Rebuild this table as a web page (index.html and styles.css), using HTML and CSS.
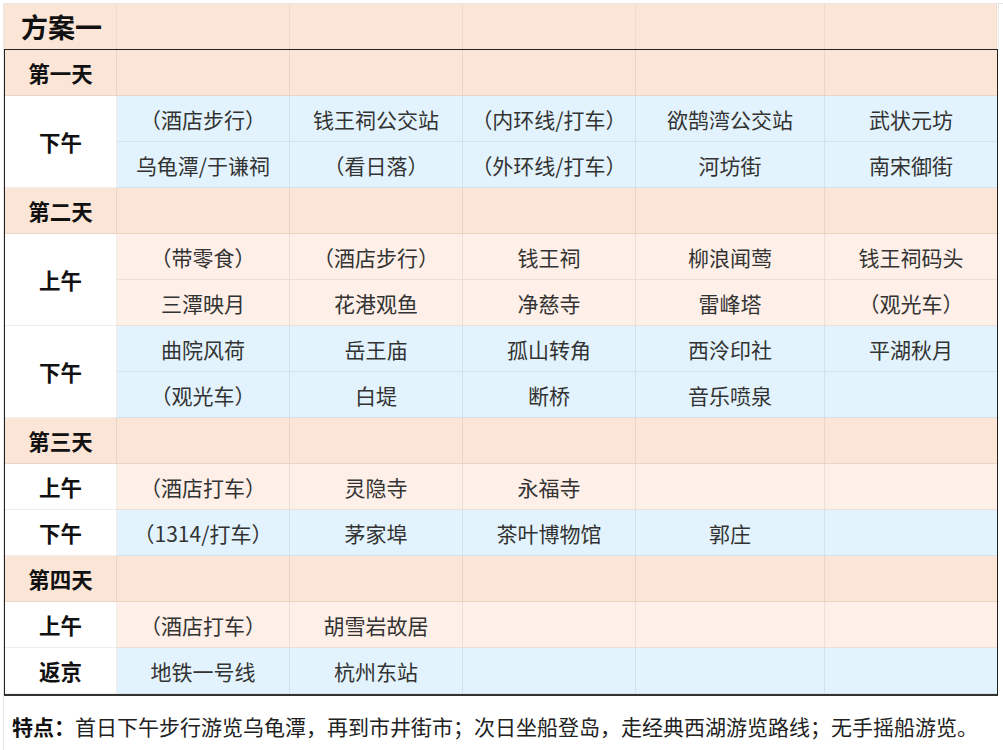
FILE: index.html
```html
<!DOCTYPE html>
<html lang="zh-CN">
<head>
<meta charset="utf-8">
<title>方案一</title>
<link rel="stylesheet" href="styles.css">
</head>
<body>
<div class="sheet">
  <div class="title-row">
    <div class="tcell title">方案一</div>
    <div class="tcell"></div>
    <div class="tcell"></div>
    <div class="tcell"></div>
    <div class="tcell"></div>
    <div class="tcell"></div>
  </div>
  <div class="plan">
    <div class="c day label">第一天</div>
    <div class="c day"></div><div class="c day"></div><div class="c day"></div><div class="c day"></div><div class="c day end"></div>

    <div class="c label span2">下午</div>
    <div class="c blue">（酒店步行）</div>
    <div class="c blue">钱王祠公交站</div>
    <div class="c blue">（内环线/打车）</div>
    <div class="c blue">欲鹄湾公交站</div>
    <div class="c blue end">武状元坊</div>
    <div class="c blue">乌龟潭/于谦祠</div>
    <div class="c blue">（看日落）</div>
    <div class="c blue">（外环线/打车）</div>
    <div class="c blue">河坊街</div>
    <div class="c blue end">南宋御街</div>

    <div class="c day label">第二天</div>
    <div class="c day"></div><div class="c day"></div><div class="c day"></div><div class="c day"></div><div class="c day end"></div>

    <div class="c label span2">上午</div>
    <div class="c peach">（带零食）</div>
    <div class="c peach">（酒店步行）</div>
    <div class="c peach">钱王祠</div>
    <div class="c peach">柳浪闻莺</div>
    <div class="c peach end">钱王祠码头</div>
    <div class="c peach">三潭映月</div>
    <div class="c peach">花港观鱼</div>
    <div class="c peach">净慈寺</div>
    <div class="c peach">雷峰塔</div>
    <div class="c peach end">（观光车）</div>

    <div class="c label span2">下午</div>
    <div class="c blue">曲院风荷</div>
    <div class="c blue">岳王庙</div>
    <div class="c blue">孤山转角</div>
    <div class="c blue">西泠印社</div>
    <div class="c blue end">平湖秋月</div>
    <div class="c blue">（观光车）</div>
    <div class="c blue">白堤</div>
    <div class="c blue">断桥</div>
    <div class="c blue">音乐喷泉</div>
    <div class="c blue end"></div>

    <div class="c day label">第三天</div>
    <div class="c day"></div><div class="c day"></div><div class="c day"></div><div class="c day"></div><div class="c day end"></div>

    <div class="c label">上午</div>
    <div class="c peach">（酒店打车）</div>
    <div class="c peach">灵隐寺</div>
    <div class="c peach">永福寺</div>
    <div class="c peach"></div>
    <div class="c peach end"></div>

    <div class="c label">下午</div>
    <div class="c blue">（1314/打车）</div>
    <div class="c blue">茅家埠</div>
    <div class="c blue">茶叶博物馆</div>
    <div class="c blue">郭庄</div>
    <div class="c blue end"></div>

    <div class="c day label">第四天</div>
    <div class="c day"></div><div class="c day"></div><div class="c day"></div><div class="c day"></div><div class="c day end"></div>

    <div class="c label">上午</div>
    <div class="c peach">（酒店打车）</div>
    <div class="c peach">胡雪岩故居</div>
    <div class="c peach"></div>
    <div class="c peach"></div>
    <div class="c peach end"></div>

    <div class="c label">返京</div>
    <div class="c blue">地铁一号线</div>
    <div class="c blue">杭州东站</div>
    <div class="c blue"></div>
    <div class="c blue"></div>
    <div class="c blue end"></div>
  </div>
  <p class="note"><b>特点：</b>首日下午步行游览乌龟潭，再到市井街市；次日坐船登岛，走经典西湖游览路线；无手摇船游览。</p>
</div>
</body>
</html>
```
FILE: styles.css
```css
html, body {
  margin: 0;
  padding: 0;
  background: #ffffff;
}

body {
  font-family: "Noto Sans CJK SC", "Noto Sans", "Liberation Sans", sans-serif;
  color: #333333;
}

.sheet {
  margin: 3px 0 0 3px;
  border-top: 1px solid #e6e6e6;
  border-left: 1px solid #e6e6e6;
  min-height: 760px;
  box-sizing: border-box;
}

.title-row {
  display: grid;
  grid-template-columns: 113px 173px 173px 173px 189px 172px;
  height: 45px;
  border-right: 1px solid #e6e6e6;
  width: 994px;
}

.tcell {
  background: #fbe5d6;
  border-right: 1px solid rgba(0, 0, 0, 0.05);
  box-sizing: border-box;
}

.tcell.title {
  display: flex;
  align-items: center;
  padding-left: 17px;
  font-size: 27px;
  font-weight: 700;
  color: #111111;
}

.plan {
  display: grid;
  grid-template-columns: 112px 173px 173px 173px 189px 172px;
  grid-auto-rows: 46px;
  width: 992px;
  border: 1px solid #222222;
  border-bottom: 2px solid #333333;
}

.c {
  display: flex;
  align-items: center;
  justify-content: center;
  box-sizing: border-box;
  border-right: 1px solid rgba(0, 0, 0, 0.07);
  border-bottom: 1px solid rgba(0, 0, 0, 0.07);
  font-size: 21px;
  white-space: nowrap;
  color: #333333;
}

.c.end {
  border-right: none;
}

.label {
  background: #ffffff;
  font-weight: 700;
  font-size: 21.5px;
  color: #111111;
}

.span2 {
  grid-row: span 2;
}

.day {
  background: #fbe5d6;
}

.peach {
  background: #fef0e8;
}

.blue {
  background: #e3f3fd;
}

.note {
  margin: 0;
  padding: 16px 0 0 8px;
  font-size: 21px;
  line-height: 28px;
  color: #222222;
}

.note b {
  font-weight: 700;
  color: #111111;
}
```
